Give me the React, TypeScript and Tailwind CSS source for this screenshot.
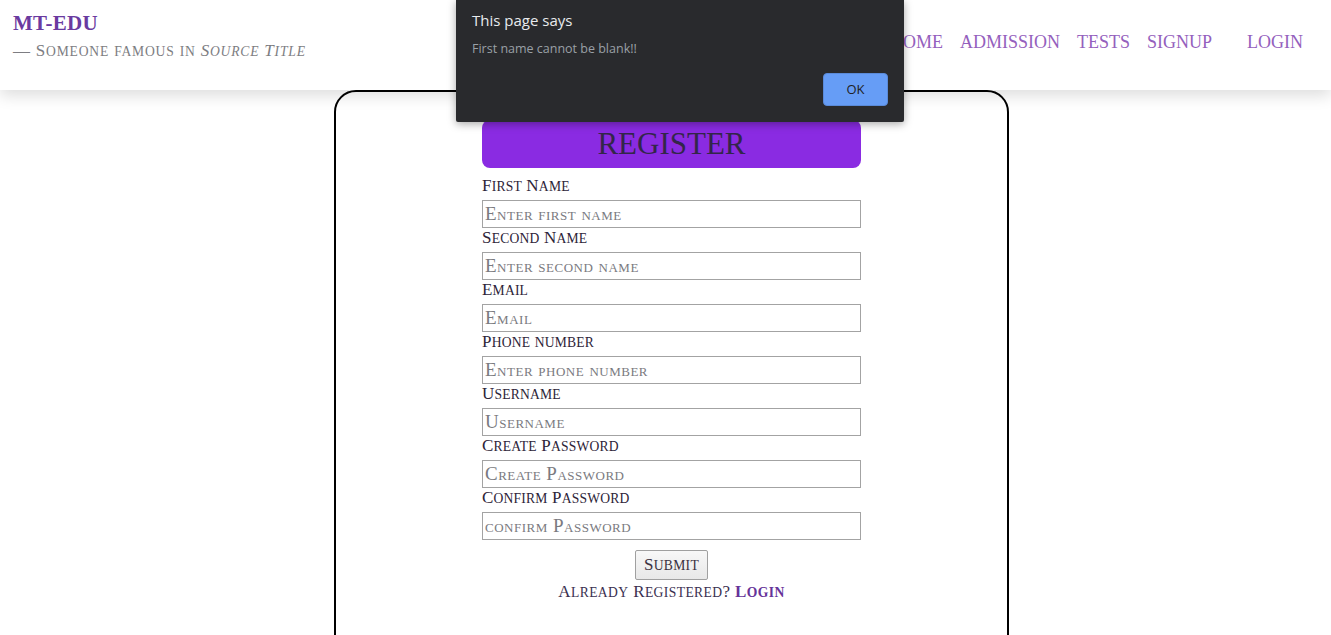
import React from "react";

const serif = "font-['Liberation_Serif',serif]";

function SC({ text }: { text: string }) {
  const parts = text.match(/[a-z]+|[^a-z]+/g) || [];
  return (
    <>
      {parts.map((p, i) =>
        /^[a-z]/.test(p) ? (
          <span key={i} className="text-[0.8em]">
            {p.toUpperCase()}
          </span>
        ) : (
          <span key={i}>{p}</span>
        )
      )}
    </>
  );
}

function Field({ label, placeholder }: { label: string; placeholder: string }) {
  return (
    <div className="flex flex-col">
      <label className="h-[20px] leading-[20px] text-[17px] text-[#2d2438] tracking-[0.2px] whitespace-nowrap">
        <SC text={label} />
      </label>
      <input
        placeholder={placeholder}
        className="mt-1 h-[28px] w-full border border-[#a3a3a3] px-[2px] text-[19px] [font-variant-caps:small-caps] tracking-[0.5px] placeholder:text-[#7a7a80] outline-none"
      />
    </div>
  );
}

export default function App() {
  return (
    <div className={`bg-white ${serif} relative overflow-hidden h-[635px]`}>
      <header className="relative z-10 h-[90px] bg-white shadow-[0_6px_14px_rgba(0,0,0,0.13)] flex items-start justify-between">
        <div className="pl-[13px] pt-[10px]">
          <div className="text-[21px] font-bold text-[#6a3aa0] leading-[26px] tracking-[0.3px]">MT-EDU</div>
          <div className="mt-[5px] text-[17px] leading-[20px] text-[#7d7d82] tracking-[0.8px] whitespace-nowrap">
            <SC text="— Someone famous in " />
            <i>
              <SC text="Source Title" />
            </i>
          </div>
        </div>
        <nav className="flex items-center gap-[17px] pt-[31px] pr-[28px] text-[18px] leading-[22px] text-[#9460bd]">
          <span>HOME</span>
          <span>ADMISSION</span>
          <span>TESTS</span>
          <span>SIGNUP</span>
          <span className="ml-[18px]">LOGIN</span>
        </nav>
      </header>

      <main className="ml-[334px] w-[675px] min-h-[620px] border-2 border-black rounded-[22px] pt-[28px] pb-12 flex flex-col items-center">
        <form className="w-[379px] flex flex-col" onSubmit={(e) => e.preventDefault()}>
          <div className="h-[48px] rounded-[8px] bg-[#8a2be2] flex items-center justify-center text-[31px] text-[#33264a] mb-2">
            REGISTER
          </div>
          <div className="flex flex-col">
            <Field label="First Name" placeholder="Enter first name" />
            <Field label="Second Name" placeholder="Enter second name" />
            <Field label="Email" placeholder="Email" />
            <Field label="Phone number" placeholder="Enter phone number" />
            <Field label="Username" placeholder="Username" />
            <Field label="Create Password" placeholder="Create Password" />
            <Field label="Confirm Password" placeholder="confirm Password" />
          </div>
          <div className="flex justify-center mt-[10px]">
            <button className="h-[30px] w-[73px] border border-[#a0a0a0] bg-gradient-to-b from-[#f8f8f8] to-[#e8e8e8] rounded-[2px] text-[17px] text-[#3a3040] tracking-[0.3px]">
              <SC text="Submit" />
            </button>
          </div>
          <p className="mt-[1px] text-center text-[17px] leading-[22px] text-[#3a3050] tracking-[0.4px] whitespace-nowrap">
            <SC text="Already Registered? " />
            <a className="font-bold text-[#663399]">
              <SC text="Login" />
            </a>
          </p>
        </form>
      </main>

      <div className="absolute left-[456px] top-0 z-20 w-[448px] h-[122px] bg-[#292a2d] rounded-b-[2px] shadow-[0_2px_8px_rgba(0,0,0,0.35)] font-['Open_Sans',sans-serif]">
        <div className="pl-[16px] pt-[9px] text-[15px] leading-[22px] text-[#e8eaed]">This page says</div>
        <div className="pl-[16px] pt-[10px] text-[12.5px] leading-[16px] text-[#9aa0a6]">First name cannot be blank!!</div>
        <button className="absolute left-[367px] top-[73px] w-[65px] h-[33px] rounded-[4px] bg-[#669df6] border border-[#5a8ad8] text-[13px] text-[#202124]">
          OK
        </button>
      </div>
    </div>
  );
}
